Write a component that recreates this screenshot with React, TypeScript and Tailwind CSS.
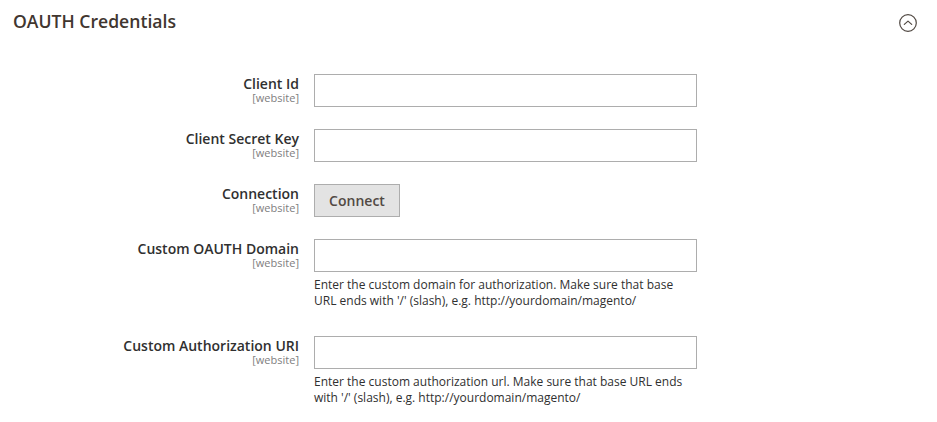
import React from 'react';

interface FieldRowProps {
  label: string;
  children: React.ReactNode;
  note?: React.ReactNode;
  last?: boolean;
}

const FieldRow = ({ label, children, note, last }: FieldRowProps) => (
  <div className={`flex gap-[15px] ${last ? '' : note ? 'mb-[27px]' : 'mb-[22px]'}`}>
    <div className="w-[299px] shrink-0 text-right pt-[1px]">
      <div className="text-[14px] leading-[17px] font-semibold text-[#303030]">{label}</div>
      <div className="text-[11px] leading-[12px] text-[#808080]">[website]</div>
    </div>
    <div className="w-[383px]">
      {children}
      {note && (
        <p className="mt-[5px] text-[12px] leading-[16px] text-[#303030]">{note}</p>
      )}
    </div>
  </div>
);

const TextInput = () => (
  <input
    type="text"
    className="block w-[383px] h-[33px] border border-[#adadad] bg-white px-[10px] text-[14px] outline-none"
  />
);

export default function App() {
  return (
    <div
      className="w-[937px] h-[422px] bg-white overflow-hidden"
      style={{ fontFamily: '"Open Sans", "Liberation Sans", sans-serif' }}
    >
      <div className="flex justify-between items-start pl-[13px] pr-[20px] pt-[10px]">
        <h2 className="text-[17.6px] leading-[23px] font-semibold text-[#41362f]">OAUTH Credentials</h2>
        <button className="mt-[4px]" aria-label="Collapse">
          <svg width="18" height="18" viewBox="0 0 18 18" fill="none">
            <circle cx="9" cy="9" r="8.3" stroke="#514943" strokeWidth="1.2" />
            <path d="M5.3 10.4 L9 7.1 L12.7 10.4" stroke="#514943" strokeWidth="1.2" strokeLinecap="round" strokeLinejoin="round" />
          </svg>
        </button>
      </div>

      <div className="mt-[41px]">
        <FieldRow label="Client Id">
          <TextInput />
        </FieldRow>
        <FieldRow label="Client Secret Key">
          <TextInput />
        </FieldRow>
        <FieldRow label="Connection">
          <button className="h-[33px] w-[86px] border border-[#adadad] bg-[#e3e3e3] text-[14px] font-semibold text-[#514943]">
            Connect
          </button>
        </FieldRow>
        <FieldRow
          label="Custom OAUTH Domain"
          note={<>Enter the custom domain for authorization. Make sure that base<br />URL ends with '/' (slash), e.g. http://yourdomain/magento/</>}
        >
          <TextInput />
        </FieldRow>
        <FieldRow
          label="Custom Authorization URI"
          last
          note={<>Enter the custom authorization url. Make sure that base URL ends<br />with '/' (slash), e.g. http://yourdomain/magento/</>}
        >
          <TextInput />
        </FieldRow>
      </div>
    </div>
  );
}
